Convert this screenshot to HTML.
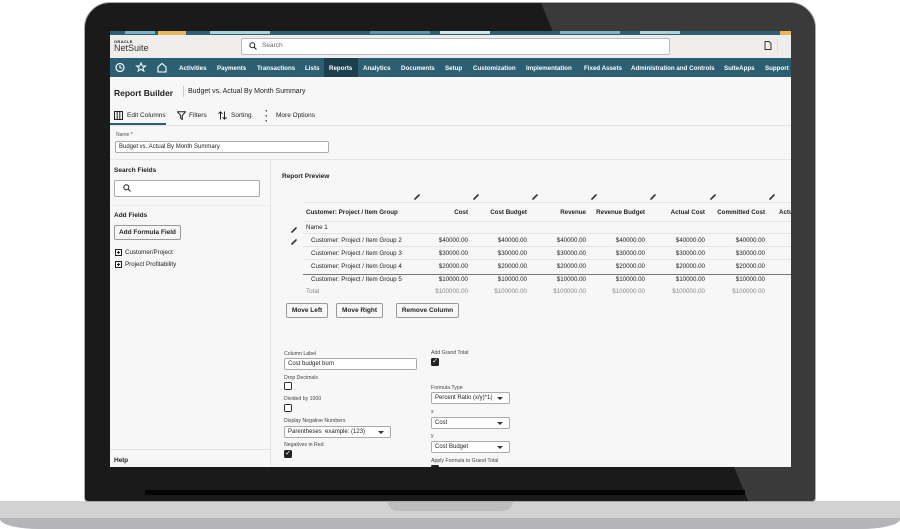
<!DOCTYPE html>
<html><head><meta charset="utf-8"><style>
*{box-sizing:border-box;margin:0;padding:0}
body{width:900px;height:529px;background:#fff;position:relative;overflow:hidden;font-family:"Liberation Sans",sans-serif;color:#222}
.a{position:absolute}
.t{position:absolute;white-space:nowrap;font-size:6.5px;color:#222}
.b{font-weight:bold}
.inp{position:absolute;background:#fff;border:1px solid #aaa;border-radius:2px}
.btn{position:absolute;background:#f7f7f7;border:1px solid #999;border-radius:2px;font-size:6.5px;font-weight:bold;text-align:center;white-space:nowrap}
.cb{position:absolute;width:8px;height:8px;border:1px solid #333;border-radius:1.5px;background:#fff}
.cbk{position:absolute;width:8px;height:8px;background:#222;border-radius:1.5px;color:#fff;font-size:7px;line-height:8px;text-align:center}
.r{text-align:right}
.sel:after{content:"";position:absolute;right:6px;top:4px;border:3px solid transparent;border-top:3px solid #333}
</style></head><body>
<!-- base -->
<div class="a" style="left:0;top:501px;width:900px;height:28px;background:#d2d2d2;border-radius:0 0 40px 40px / 0 0 12px 12px"></div>
<div class="a" style="left:0;top:518px;width:900px;height:11px;background:#b5b5b9;border-radius:0 0 40px 40px / 0 0 10px 10px"></div>
<div class="a" style="left:388px;top:501px;width:125px;height:10px;background:#bdbdbd;border-radius:0 0 10px 10px"></div>
<!-- bezel -->
<div class="a" style="left:84px;top:2px;width:732px;height:500px;background:#1a1a1a;border-radius:26px 26px 4px 4px;overflow:hidden;border:1px solid #aaa">
<svg class="a" style="left:0;top:0" width="732" height="500"><polygon points="456,0 732,0 732,500 664,500" fill="#3a3a3a"/></svg>
<div class="a" style="left:60px;top:487px;width:600px;height:5px;background:#050505"></div>
</div>
<!-- screen -->
<div class="a" style="left:110px;top:31px;width:681px;height:436px;background:#f8f7f7;overflow:hidden">
<svg class="a" style="left:0;top:0" width="681" height="4"><rect width="681" height="4" fill="#2d5f73"/><rect x="15" width="30" height="3" fill="#7ab3c3"/><rect x="48" width="28" height="4" fill="#e8b95a"/><rect x="100" width="60" height="3" fill="#a9d2dc"/><rect x="260" width="60" height="3" fill="#5a95a8"/><rect x="330" width="50" height="3" fill="#cfe6ec"/><rect x="450" width="60" height="3" fill="#7ab3c3"/><rect x="530" width="40" height="3" fill="#a9d2dc"/><rect x="670" width="11" height="4" fill="#e8b95a"/></svg>
<div class="a" style="left:0;top:4px;width:681px;height:23px;background:#efeeed"></div>
<div class="t" style="left:4px;top:8px;font-size:4px;font-weight:bold;letter-spacing:.3px">ORACLE</div>
<div class="t" style="left:4px;top:12px;font-size:9px;color:#333">NetSuite</div>
<div class="inp" style="left:131px;top:7px;width:429px;height:17px;border-color:#bbb"></div>
<svg class="a" style="left:139px;top:11px" width="8" height="8"><circle cx="3.3" cy="3.3" r="2.5" fill="none" stroke="#222" stroke-width="1"/><line x1="5" y1="5" x2="7.5" y2="7.5" stroke="#222" stroke-width="1"/></svg>
<div class="t" style="left:152px;top:11px;color:#666">Search</div>
<svg class="a" style="left:654px;top:10px" width="8" height="9"><path d="M1 .5h4l2 2v6H1z" fill="none" stroke="#333"/></svg>
<div class="a" style="left:667px;top:8px;width:1px;height:14px;background:#ddd"></div>
<!-- nav -->
<div class="a" style="left:0;top:27px;width:681px;height:19px;background:#2d5f73"></div>
<div class="a" style="left:214px;top:27px;width:34px;height:19px;background:#1c3f4e"></div>
<svg class="a" style="left:5px;top:31px" width="60" height="11"><circle cx="5" cy="5.5" r="4" fill="none" stroke="#fff" stroke-width="1.2"/><path d="M5 3v3h2" stroke="#fff" fill="none"/><path d="M26 1l1.3 3h3.2l-2.6 2 1 3.2-2.9-2-2.9 2 1-3.2-2.6-2h3.2z" fill="none" stroke="#fff" stroke-width="1"/><path d="M43 10V5l4-3.5 4 3.5v5z" fill="none" stroke="#fff" stroke-width="1.1"/></svg>
<div class="t b" style="left:69px;top:34px;color:#fff;font-size:6.2px">Activities</div>
<div class="t b" style="left:107px;top:34px;color:#fff;font-size:6.2px">Payments</div>
<div class="t b" style="left:147px;top:34px;color:#fff;font-size:6.2px">Transactions</div>
<div class="t b" style="left:195px;top:34px;color:#fff;font-size:6.2px">Lists</div>
<div class="t b" style="left:219px;top:34px;color:#fff;font-size:6.2px">Reports</div>
<div class="t b" style="left:253px;top:34px;color:#fff;font-size:6.2px">Analytics</div>
<div class="t b" style="left:291px;top:34px;color:#fff;font-size:6.2px">Documents</div>
<div class="t b" style="left:335px;top:34px;color:#fff;font-size:6.2px">Setup</div>
<div class="t b" style="left:363px;top:34px;color:#fff;font-size:6.2px">Customization</div>
<div class="t b" style="left:416px;top:34px;color:#fff;font-size:6.2px">Implementation</div>
<div class="t b" style="left:474px;top:34px;color:#fff;font-size:6.2px">Fixed Assets</div>
<div class="t b" style="left:521px;top:34px;color:#fff;font-size:6.2px">Administration and Controls</div>
<div class="t b" style="left:614px;top:34px;color:#fff;font-size:6.2px">SuiteApps</div>
<div class="t b" style="left:655px;top:34px;color:#fff;font-size:6.2px">Support</div>
<!-- title -->
<div class="t b" style="left:4px;top:57px;font-size:8.5px">Report Builder</div>
<div class="a" style="left:73px;top:55px;width:1px;height:11px;background:#ccc"></div>
<div class="t" style="left:78px;top:57px;font-size:7px">Budget vs. Actual By Month Summary</div>
<!-- tabs -->
<svg class="a" style="left:4px;top:80px" width="9" height="9"><rect x=".5" y=".5" width="8" height="8" fill="none" stroke="#222"/><path d="M3.2 .5v8M5.8 .5v8" stroke="#222"/></svg>
<div class="t" style="left:17px;top:81px">Edit Columns</div>
<div class="a" style="left:0;top:92px;width:56px;height:1.5px;background:#2d5f73"></div>
<svg class="a" style="left:67px;top:80px" width="9" height="9"><path d="M.5 .8h8L5.3 4.5v4L3.7 7.4V4.5z" fill="none" stroke="#222"/></svg>
<div class="t" style="left:79px;top:81px">Filters</div>
<svg class="a" style="left:108px;top:80px" width="9" height="9"><path d="M2.5 8.5V.8M.5 2.8l2-2 2 2M6.5 .5v7.7M4.5 6.2l2 2 2-2" fill="none" stroke="#222"/></svg>
<div class="t" style="left:121px;top:81px">Sorting</div>
<div class="t b" style="left:155px;top:78px;font-size:9px;line-height:5px">·<br>·<br>·</div>
<div class="t" style="left:166px;top:81px">More Options</div>
<div class="a" style="left:0;top:94px;width:681px;height:1px;background:#e2e2e2"></div>
<div class="t" style="left:6px;top:101px;font-size:5px;color:#555">Name <span style="color:#c00">*</span></div>
<div class="inp" style="left:5px;top:110px;width:214px;height:12px"></div>
<div class="t" style="left:9px;top:112.5px;font-size:6px">Budget vs. Actual By Month Summary</div>
<div class="a" style="left:0;top:128px;width:681px;height:1px;background:#e5e5e5"></div>
<!-- left panel -->
<div class="a" style="left:160px;top:129px;width:1px;height:307px;background:#e2e2e2"></div>
<div class="t b" style="left:4px;top:136px;font-size:6.5px">Search Fields</div>
<div class="inp" style="left:4px;top:149px;width:146px;height:17px"></div>
<svg class="a" style="left:13px;top:153px" width="8" height="8"><circle cx="3.3" cy="3.3" r="2.5" fill="none" stroke="#222"/><line x1="5" y1="5" x2="7.5" y2="7.5" stroke="#222"/></svg>
<div class="a" style="left:0;top:174px;width:160px;height:1px;background:#ebebeb"></div>
<div class="t b" style="left:4px;top:181px;font-size:6.5px">Add Fields</div>
<div class="btn" style="left:4px;top:194px;width:67px;height:15px;line-height:13px">Add Formula Field</div>
<svg class="a" style="left:5px;top:218px" width="8" height="21"><rect x=".5" y=".5" width="6" height="6" fill="none" stroke="#222"/><path d="M3.5 2v3M2 3.5h3M3.5 14v3M2 15.5h3" stroke="#222"/><rect x=".5" y="12.5" width="6" height="6" fill="none" stroke="#222"/></svg>
<div class="t" style="left:15px;top:218px;font-size:6.2px">Customer/Project</div>
<div class="t" style="left:15px;top:230px;font-size:6.2px">Project Profitability</div>
<div class="a" style="left:0;top:418px;width:160px;height:1px;background:#e2e2e2"></div>
<div class="t b" style="left:4px;top:426px;font-size:6.5px">Help</div>
<!-- report preview -->
<div class="t b" style="left:172px;top:142px;font-size:6.5px">Report Preview</div>
<svg class="a" style="left:178px;top:160px" width="503" height="120">
<g stroke="#333" stroke-width="1.6" stroke-linecap="round"><path d="M127 8l4-4M186 8l4-4M245 8l4-4M304 8l4-4M363 8l4-4M423 8l4-4M482 8l4-4M4 41l4-4M4 53l4-4"/></g>
<g fill="#e4e4e4"><rect x="15" y="11" width="488" height="1"/><rect x="15" y="30" width="488" height="1"/><rect x="15" y="42" width="488" height="1"/><rect x="15" y="55" width="488" height="1"/><rect x="15" y="68" width="488" height="1"/></g>
<rect x="15" y="83" width="488" height="1" fill="#777"/>
</svg>
<div class="t b" style="left:196px;top:178px;font-size:6.2px">Customer: Project / Item Group</div>
<div class="t" style="left:196px;top:193px;font-size:6.2px">Name 1</div>
<div class="t" style="left:201px;top:206px;font-size:6.2px">Customer: Project / Item Group 2</div>
<div class="t" style="left:201px;top:219px;font-size:6.2px">Customer: Project / Item Group 3</div>
<div class="t" style="left:201px;top:232px;font-size:6.2px">Customer: Project / Item Group 4</div>
<div class="t" style="left:201px;top:245px;font-size:6.2px">Customer: Project / Item Group 5</div>
<div class="t" style="left:196px;top:257px;font-size:6.2px;color:#888">Total</div>
<!-- buttons -->
<div class="btn" style="left:176px;top:272px;width:42px;height:15px;line-height:13px">Move Left</div>
<div class="btn" style="left:226px;top:272px;width:47px;height:15px;line-height:13px">Move Right</div>
<div class="btn" style="left:286px;top:272px;width:63px;height:15px;line-height:13px">Remove Column</div>
<!-- form -->
<div class="t" style="left:174px;top:320px;font-size:5.2px;color:#444">Column Label</div>
<div class="inp" style="left:174px;top:327px;width:133px;height:12px"></div>
<div class="t" style="left:178px;top:329.5px;font-size:6px">Cost budget burn</div>
<div class="t" style="left:174px;top:344px;font-size:5.2px;color:#444">Drop Decimals</div>
<div class="cb" style="left:174px;top:351px"></div>
<div class="t" style="left:174px;top:365px;font-size:5.2px;color:#444">Divided by 1000</div>
<div class="cb" style="left:174px;top:373px"></div>
<div class="t" style="left:174px;top:387px;font-size:5.2px;color:#444">Display Negative Numbers</div>
<div class="inp sel" style="left:174px;top:395px;width:107px;height:12px"></div>
<div class="t" style="left:178px;top:397.5px;font-size:6px">Parentheses &nbsp;example: (123)</div>
<div class="t" style="left:174px;top:411px;font-size:5.2px;color:#444">Negatives in Red</div>
<div class="cbk" style="left:174px;top:419px">✓</div>
<div class="t" style="left:321px;top:319px;font-size:5.2px;color:#444">Add Grand Total</div>
<div class="cbk" style="left:321px;top:327px">✓</div>
<div class="t" style="left:321px;top:354px;font-size:5.2px;color:#444">Formula Type</div>
<div class="inp sel" style="left:321px;top:361px;width:79px;height:12px"></div>
<div class="t" style="left:325px;top:363.5px;font-size:6px">Percent Ratio (x/y)*1(</div>
<div class="t" style="left:321px;top:378px;font-size:5.2px;color:#444">x</div>
<div class="inp sel" style="left:321px;top:386px;width:79px;height:12px"></div>
<div class="t" style="left:325px;top:388.5px;font-size:6px">Cost</div>
<div class="t" style="left:321px;top:402px;font-size:5.2px;color:#444">y</div>
<div class="inp sel" style="left:321px;top:410px;width:79px;height:12px"></div>
<div class="t" style="left:325px;top:412.5px;font-size:6px">Cost Budget</div>
<div class="t" style="left:321px;top:427px;font-size:5.2px;color:#444">Apply Formula to Grand Total</div>
<div class="a" style="left:321px;top:434px;width:8px;height:4px;background:#222;border-radius:1.5px"></div>
<!-- columns -->
<div class="t b r" style="left:318px;top:178px;width:40px;font-size:6.2px">Cost</div>
<div class="t b r" style="left:357px;top:178px;width:60px;font-size:6.2px">Cost Budget</div>
<div class="t b r" style="left:416px;top:178px;width:60px;font-size:6.2px">Revenue</div>
<div class="t b r" style="left:475px;top:178px;width:60px;font-size:6.2px">Revenue Budget</div>
<div class="t b r" style="left:535px;top:178px;width:60px;font-size:6.2px">Actual Cost</div>
<div class="t b r" style="left:595px;top:178px;width:60px;font-size:6.2px">Committed Cost</div>
<div class="t b" style="left:669px;top:178px;font-size:6.2px">Actual</div>
<div class="a" style="left:298px;top:204px;width:360px">
<div class="t r" style="left:0;top:2px;width:60px;font-size:6.2px">$40000.00</div><div class="t r" style="left:59px;top:2px;width:60px;font-size:6.2px">$40000.00</div><div class="t r" style="left:118px;top:2px;width:60px;font-size:6.2px">$40000.00</div><div class="t r" style="left:177px;top:2px;width:60px;font-size:6.2px">$40000.00</div><div class="t r" style="left:237px;top:2px;width:60px;font-size:6.2px">$40000.00</div><div class="t r" style="left:297px;top:2px;width:60px;font-size:6.2px">$40000.00</div>
<div class="t r" style="left:0;top:15px;width:60px;font-size:6.2px">$30000.00</div><div class="t r" style="left:59px;top:15px;width:60px;font-size:6.2px">$30000.00</div><div class="t r" style="left:118px;top:15px;width:60px;font-size:6.2px">$30000.00</div><div class="t r" style="left:177px;top:15px;width:60px;font-size:6.2px">$30000.00</div><div class="t r" style="left:237px;top:15px;width:60px;font-size:6.2px">$30000.00</div><div class="t r" style="left:297px;top:15px;width:60px;font-size:6.2px">$30000.00</div>
<div class="t r" style="left:0;top:28px;width:60px;font-size:6.2px">$20000.00</div><div class="t r" style="left:59px;top:28px;width:60px;font-size:6.2px">$20000.00</div><div class="t r" style="left:118px;top:28px;width:60px;font-size:6.2px">$20000.00</div><div class="t r" style="left:177px;top:28px;width:60px;font-size:6.2px">$20000.00</div><div class="t r" style="left:237px;top:28px;width:60px;font-size:6.2px">$20000.00</div><div class="t r" style="left:297px;top:28px;width:60px;font-size:6.2px">$20000.00</div>
<div class="t r" style="left:0;top:41px;width:60px;font-size:6.2px">$10000.00</div><div class="t r" style="left:59px;top:41px;width:60px;font-size:6.2px">$10000.00</div><div class="t r" style="left:118px;top:41px;width:60px;font-size:6.2px">$10000.00</div><div class="t r" style="left:177px;top:41px;width:60px;font-size:6.2px">$10000.00</div><div class="t r" style="left:237px;top:41px;width:60px;font-size:6.2px">$10000.00</div><div class="t r" style="left:297px;top:41px;width:60px;font-size:6.2px">$10000.00</div>
<div class="t r" style="left:0;top:53px;width:60px;font-size:6.2px;color:#888">$100000.00</div><div class="t r" style="left:59px;top:53px;width:60px;font-size:6.2px;color:#888">$100000.00</div><div class="t r" style="left:118px;top:53px;width:60px;font-size:6.2px;color:#888">$100000.00</div><div class="t r" style="left:177px;top:53px;width:60px;font-size:6.2px;color:#888">$100000.00</div><div class="t r" style="left:237px;top:53px;width:60px;font-size:6.2px;color:#888">$100000.00</div><div class="t r" style="left:297px;top:53px;width:60px;font-size:6.2px;color:#888">$100000.00</div>
</div>
</div>
</body></html>
